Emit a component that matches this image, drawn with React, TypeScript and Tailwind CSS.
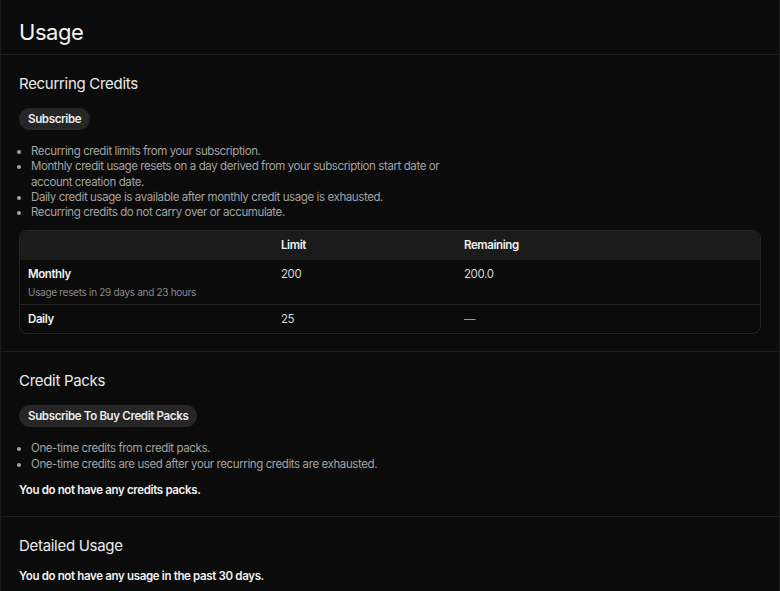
import React from 'react';

const recurringNotes = [
  'Recurring credit limits from your subscription.',
  'Monthly credit usage resets on a day derived from your subscription start date or account creation date.',
  'Daily credit usage is available after monthly credit usage is exhausted.',
  'Recurring credits do not carry over or accumulate.',
];

const packNotes = [
  'One-time credits from credit packs.',
  'One-time credits are used after your recurring credits are exhausted.',
];

const Pill: React.FC<{ label: string }> = ({ label }) => (
  <button className="self-start h-[22px] px-[9px] rounded-full bg-[#262626] text-[11.5px] leading-4 tracking-[-0.03em] font-semibold text-[#ececec]">
    {label}
  </button>
);

const Notes: React.FC<{ items: string[] }> = ({ items }) => (
  <ul className="max-w-md mt-[2px] -mb-[2px] list-disc pl-3 text-[11.5px] leading-[15.25px] tracking-[-0.035em] text-[#a3a3a3] marker:text-[#a3a3a3]">
    {items.map((item) => (
      <li key={item}>{item}</li>
    ))}
  </ul>
);

const SectionTitle: React.FC<{ children: React.ReactNode }> = ({ children }) => (
  <h2 className="text-[15px] leading-6 tracking-[-0.02em] font-normal text-[#ececec]">{children}</h2>
);

const CreditsTable = () => (
  <div className="rounded-lg border border-[#262626] overflow-hidden text-[11.5px] leading-4 tracking-[-0.035em]">
    <div className="grid grid-cols-[253px_183px_1fr] bg-[#1b1b1b] font-semibold text-[#f2f2f2] border-b border-[#1f1f1f]">
      <div className="px-2 py-1.5" />
      <div className="px-2 py-1.5">Limit</div>
      <div className="px-2 py-1.5">Remaining</div>
    </div>
    <div className="grid grid-cols-[253px_183px_1fr] border-b border-[#262626] text-[#d4d4d4]">
      <div className="px-2 py-1.5">
        <div className="font-semibold text-[#f2f2f2]">Monthly</div>
        <div className="mt-1 text-[10px] leading-3 tracking-[-0.03em] text-[#8a8a8a]">Usage resets in 29 days and 23 hours</div>
      </div>
      <div className="px-2 py-1.5">200</div>
      <div className="px-2 py-1.5">200.0</div>
    </div>
    <div className="grid grid-cols-[253px_183px_1fr] text-[#d4d4d4]">
      <div className="px-2 py-1.5 font-semibold text-[#f2f2f2]">Daily</div>
      <div className="px-2 py-1.5">25</div>
      <div className="px-2 py-1.5 text-[#9a9a9a]">—</div>
    </div>
  </div>
);

export default function App() {
  return (
    <div
      className="min-h-screen bg-[#0b0b0b] text-white border-x border-[#1c1c1c]"
      style={{ fontFamily: 'Inter, "Noto Sans", sans-serif' }}
    >
      <header className="px-[18px] pt-4 pb-1.5 border-b border-[#222222]">
        <h1 className="text-[22px] leading-8 tracking-[-0.02em] font-normal text-[#f2f2f2]">Usage</h1>
      </header>

      <section className="flex flex-col gap-3 px-[18px] py-[17px] border-b border-[#222222]">
        <SectionTitle>Recurring Credits</SectionTitle>
        <Pill label="Subscribe" />
        <Notes items={recurringNotes} />
        <CreditsTable />
      </section>

      <section className="flex flex-col gap-3 px-[18px] pt-[17px] pb-[18px] border-b border-[#222222]">
        <SectionTitle>Credit Packs</SectionTitle>
        <Pill label="Subscribe To Buy Credit Packs" />
        <Notes items={packNotes} />
        <p className="text-[11.5px] leading-4 tracking-[-0.03em] font-semibold text-[#f2f2f2]">You do not have any credits packs.</p>
      </section>

      <section className="flex flex-col gap-2.5 px-[18px] py-[17px]">
        <SectionTitle>Detailed Usage</SectionTitle>
        <p className="text-[11.5px] leading-4 tracking-[-0.03em] font-semibold text-[#f2f2f2]">You do not have any usage in the past 30 days.</p>
      </section>
    </div>
  );
}
